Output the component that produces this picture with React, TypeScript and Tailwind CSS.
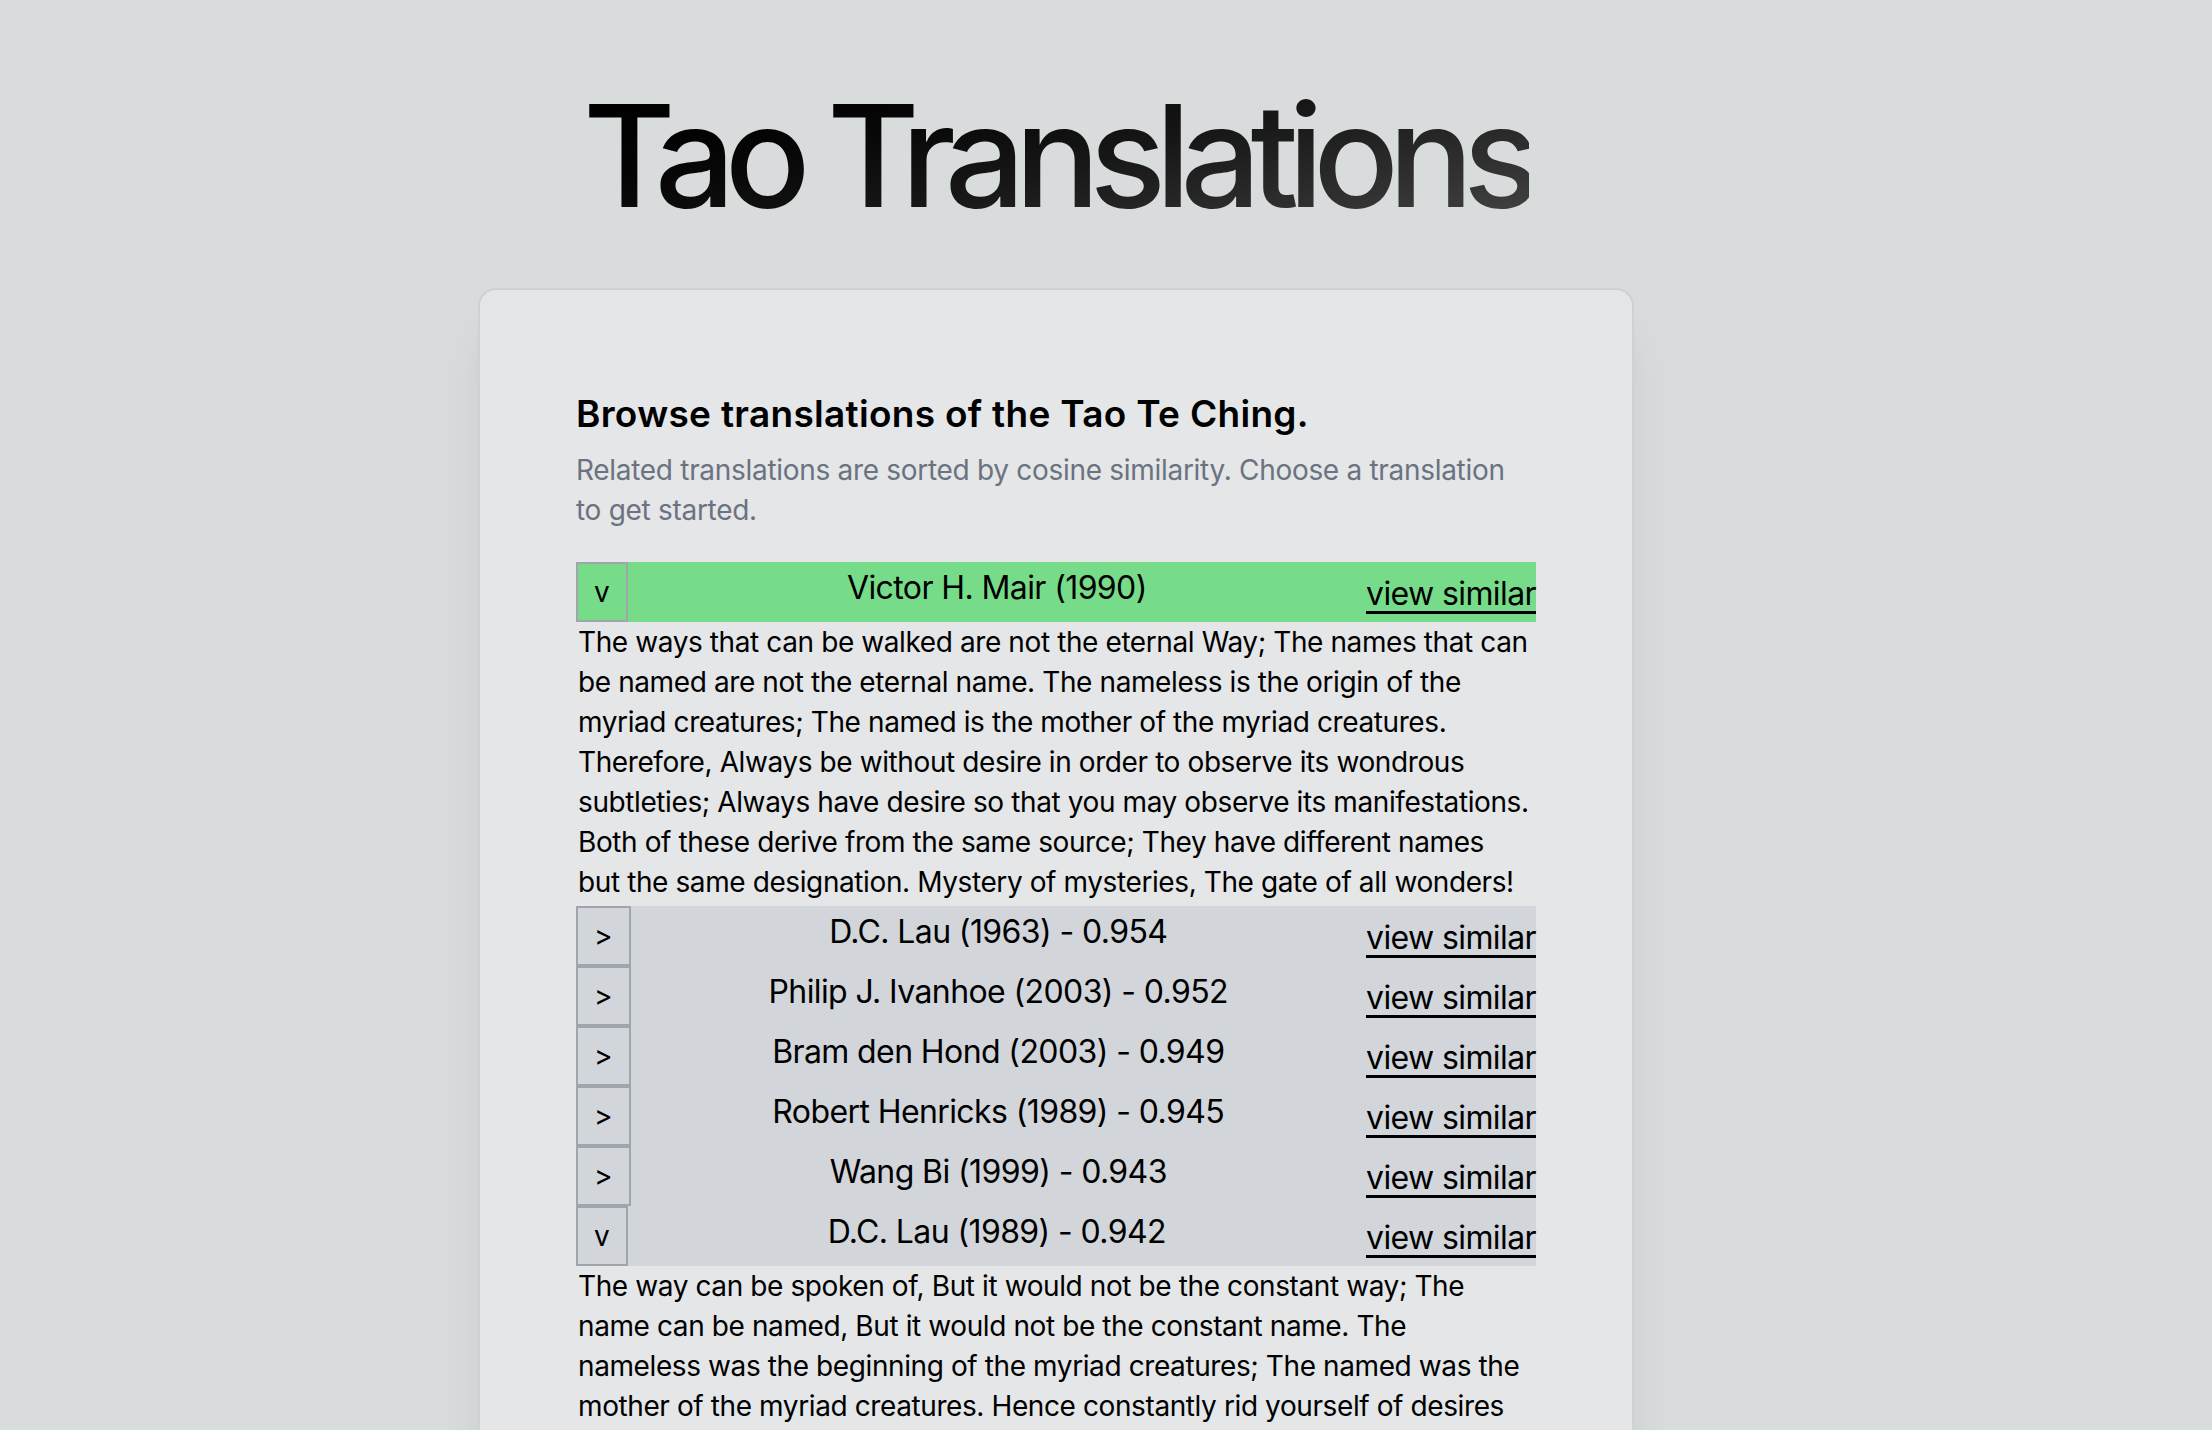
import React, { useState } from "react";

interface Translation {
  id: string;
  name: string;
  score?: string;
  text?: string;
}

const selected: Translation = {
  id: "mair-1990",
  name: "Victor H. Mair (1990)",
  text: "The ways that can be walked are not the eternal Way; The names that can be named are not the eternal name. The nameless is the origin of the myriad creatures; The named is the mother of the myriad creatures. Therefore, Always be without desire in order to observe its wondrous subtleties; Always have desire so that you may observe its manifestations. Both of these derive from the same source; They have different names but the same designation. Mystery of mysteries, The gate of all wonders!",
};

const related: Translation[] = [
  { id: "lau-1963", name: "D.C. Lau (1963)", score: "0.954" },
  { id: "ivanhoe-2003", name: "Philip J. Ivanhoe (2003)", score: "0.952" },
  { id: "hond-2003", name: "Bram den Hond (2003)", score: "0.949" },
  { id: "henricks-1989", name: "Robert Henricks (1989)", score: "0.945" },
  { id: "wangbi-1999", name: "Wang Bi (1999)", score: "0.943" },
  {
    id: "lau-1989",
    name: "D.C. Lau (1989)",
    score: "0.942",
    text: "The way can be spoken of, But it would not be the constant way; The name can be named, But it would not be the constant name. The nameless was the beginning of the myriad creatures; The named was the mother of the myriad creatures. Hence constantly rid yourself of desires in order to observe its secrets; But always allow yourself to have desires in order to observe its manifestations. These two are the same But diverge in name as they issue forth. Being the same they are called mysteries, Mystery upon mystery – The gateway of the manifold secrets.",
  },
];

const Row: React.FC<{ item: Translation; open: boolean; green?: boolean; onToggle: () => void }> = ({
  item,
  open,
  green,
  onToggle,
}) => {
  return (
    <div>
      <div className={`flex h-[60px] ${green ? "bg-[#77dc89]" : "bg-[#d2d5da]"}`}>
        <button
          onClick={onToggle}
          className="h-[60px] border-2 border-[#a0a5ad] px-[16px] py-[8px] text-[28px] leading-[40px] text-black"
        >
          {open ? "v" : ">"}
        </button>
        <div className="flex-1 pt-[2px] text-center text-[32px] leading-[48px] tracking-[-0.6px] text-black">
          {item.score ? `${item.name} - ${item.score}` : item.name}
        </div>
        <a
          href="#"
          className="self-center pt-[4px] text-[32px] leading-[48px] tracking-[-0.6px] text-black underline decoration-[3px] underline-offset-[6px]"
        >
          view similar
        </a>
      </div>
      {open && item.text && (
        <p className="pr-[5px] pb-[4px] pl-[2px] text-[28px] leading-[40px] tracking-[-0.4px] text-black">
          {item.text}
        </p>
      )}
    </div>
  );
};

export default function App() {
  const [openIds, setOpenIds] = useState<string[]>(["mair-1990", "lau-1989"]);

  const toggle = (id: string) =>
    setOpenIds((ids) => (ids.includes(id) ? ids.filter((x) => x !== id) : [...ids, id]));

  return (
    <main className="flex min-h-screen flex-col items-center bg-[#d9dcdd] pt-[52px] pr-[100px] font-[Inter,'Noto_Sans',sans-serif]">
      <h1 className="bg-linear-to-br from-black via-[#171717] to-[#575757] bg-clip-text pt-[32px] pb-[64px] text-center text-[142px] leading-none font-medium tracking-[-0.075em] text-transparent">
        Tao Translations
      </h1>

      <div className="w-[1152px] rounded-[16px] bg-[#e4e6e7] p-[96px] shadow-[0_40px_50px_-10px_rgba(0,0,0,0.1),0_16px_20px_-12px_rgba(0,0,0,0.1)] ring-2 ring-[#cfd2d4]">
        <h2 className="text-[37px] leading-[56px] font-semibold tracking-[0.3px] text-black">
          Browse translations of the Tao Te Ching.
        </h2>
        <p className="mt-[8px] text-[28px] leading-[40px] tracking-[-0.3px] text-[#6b7280]">
          Related translations are sorted by cosine similarity. Choose a translation to get started.
        </p>

        <div className="mt-[32px]">
          <Row item={selected} green open={openIds.includes(selected.id)} onToggle={() => toggle(selected.id)} />
          {related.map((t) => (
            <Row key={t.id} item={t} open={openIds.includes(t.id)} onToggle={() => toggle(t.id)} />
          ))}
        </div>
      </div>
    </main>
  );
}
